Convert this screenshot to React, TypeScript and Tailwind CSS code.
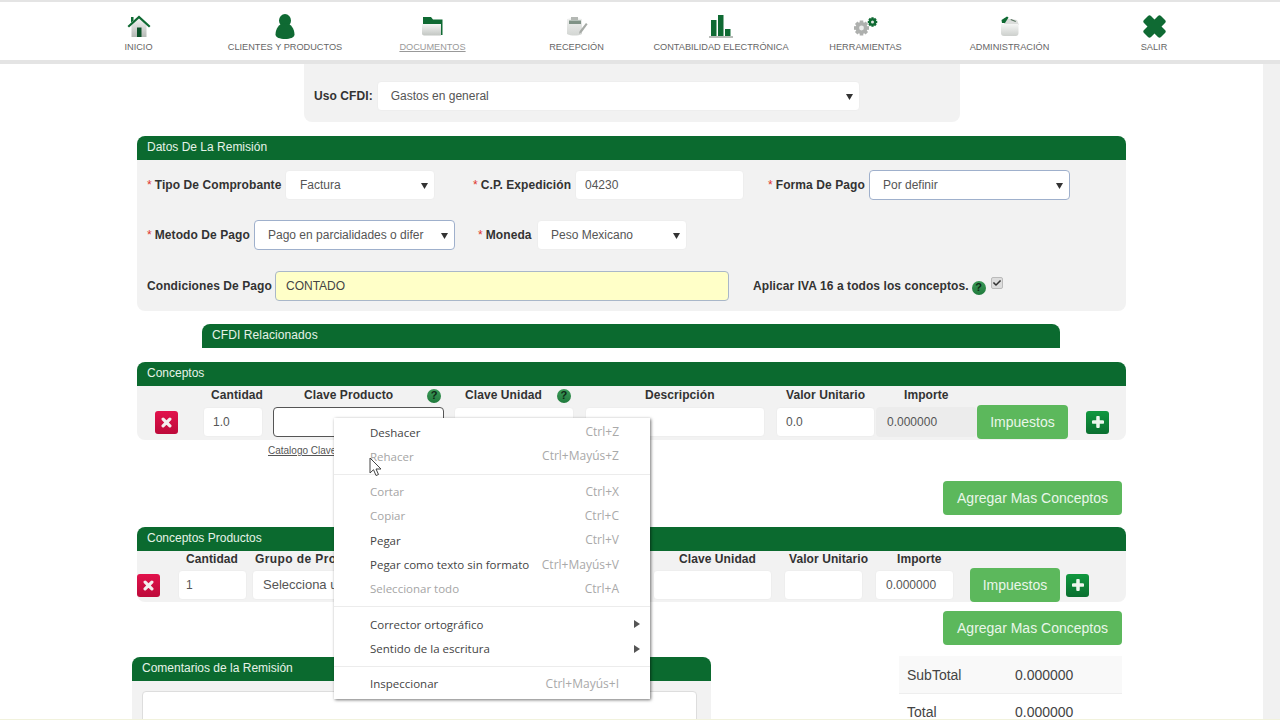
import React from "react";
import { FaCheck } from "react-icons/fa";

const GREEN = "#0f6a33";

function HomeIcon() {
  return (
    <svg width="24" height="22" viewBox="0 0 24 22">
      <defs>
        <linearGradient id="homeBody" x1="0" y1="0" x2="0" y2="1">
          <stop offset="0" stopColor="#f4f5f4" />
          <stop offset="1" stopColor="#b4b8b4" />
        </linearGradient>
      </defs>
      <path d="M4.500 10 12 3.500l7.500 6.500v12h-15z" fill="url(#homeBody)" />
      <path d="M4 2h2.500v3.500L4 7.500z" fill={GREEN} />
      <path d="M0.500 11 12 0.500 23.500 11l-1.500 1.400L12 3.500 2 12.400z" fill={GREEN} />
      <path d="M10 12.500h4.500V22H10z" fill="#0c5229" />
    </svg>
  );
}

function PersonIcon() {
  return (
    <svg width="20" height="25" viewBox="0 0 20 25">
      <ellipse cx="10" cy="6.500" rx="6" ry="6.500" fill={GREEN} />
      <path d="M10 9c6 0 9.500 6 9.500 11.500 0 3-4.500 4.500-9.500 4.500S.5 23.500.5 20.500C.5 15 4 9 10 9z" fill={GREEN} />
    </svg>
  );
}

function FolderIcon() {
  return (
    <svg width="21" height="20" viewBox="0 0 21 20">
      <defs>
        <linearGradient id="folderFront" x1="0" y1="0" x2="0" y2="1">
          <stop offset="0" stopColor="#f5f6f5" />
          <stop offset="1" stopColor="#c2c6c2" />
        </linearGradient>
      </defs>
      <path d="M1 1h8l2 2.500h9.500V19H19V8H1z" fill={GREEN} />
      <path d="M1 4h17v4H1z" fill={GREEN} />
      <path d="M0 8h19v11.500H2c-1 0-2-1-2-2z" fill="url(#folderFront)" />
    </svg>
  );
}

function ClipboardIcon() {
  return (
    <svg width="22" height="20" viewBox="0 0 22 20">
      <defs>
        <linearGradient id="clipBody" x1="0" y1="0" x2="0" y2="1">
          <stop offset="0" stopColor="#f0f1f0" />
          <stop offset="1" stopColor="#d3d6d3" />
        </linearGradient>
      </defs>
      <path d="M1 3c4-1.500 11-1.500 15 0v15c-4 2-11 2-15 0z" fill="url(#clipBody)" />
      <path d="M5 1h7v3H5z" fill="#b4b8b4" />
      <path d="M3 4.500h12v3.500H3z" fill="#7f9286" />
      <path d="M20 7l1.600 1.200-6 8.300-2.600 1.300.7-2.800z" fill="#a7aba7" />
    </svg>
  );
}

function BarsIcon() {
  return (
    <svg width="24" height="23" viewBox="0 0 24 23">
      <path d="M2 5h5.500v16H2zM9 0h5.500v21H9zM16 14h5.500v7H16z" fill={GREEN} />
      <path d="M0 21h24v2H0z" fill="#b9bdb9" />
    </svg>
  );
}

function Gear({ cx, cy, r, fill, hole }: { cx: number; cy: number; r: number; fill: string; hole: string }) {
  const teeth = [0, 45, 90, 135];
  return (
    <g>
      {teeth.map((a) => (
        <rect
          key={a}
          x={cx - r * 0.3}
          y={cy - r * 1.25}
          width={r * 0.6}
          height={r * 2.5}
          fill={fill}
          transform={`rotate(${a} ${cx} ${cy})`}
        />
      ))}
      <circle cx={cx} cy={cy} r={r} fill={fill} />
      <circle cx={cx} cy={cy} r={r * 0.4} fill={hole} />
    </g>
  );
}

function GearsIcon() {
  return (
    <svg width="25" height="19" viewBox="0 0 25 19">
      <Gear cx={8.500} cy={11} r={6} fill="#aeb0ae" hole="#ececec" />
      <Gear cx={19.500} cy={5} r={3.800} fill={GREEN} hole="#dfe6df" />
    </svg>
  );
}

function AdminIcon() {
  return (
    <svg width="20" height="20" viewBox="0 0 20 20">
      <defs>
        <linearGradient id="adminBody" x1="0" y1="0" x2="0" y2="1">
          <stop offset="0" stopColor="#f5f6f5" />
          <stop offset="1" stopColor="#cdd0cd" />
        </linearGradient>
      </defs>
      <path d="M4 2l13 2 2 5H4z" fill="#dcdedc" />
      <path d="M1.500 4 7 0.500l1.500 1L5 7H2z" fill={GREEN} />
      <path d="M11 3l5 2-.5 1-5-2z" fill="#59735f" />
      <path d="M1 8h17.500v9c0 2-1 3-3 3H4c-2 0-3-1-3-3z" fill="url(#adminBody)" />
    </svg>
  );
}

function ExitIcon() {
  return (
    <svg width="25" height="25" viewBox="0 0 25 25">
      <path
        d="M2 6 6 2c1-1 2-1 3 0l3.500 3.500L16 2c1-1 2-1 3 0l4 4c1 1 1 2 0 3l-3.500 3.500L23 16c1 1 1 2 0 3l-4 4c-1 1-2 1-3 0l-3.500-3.500L9 23c-1 1-2 1-3 0l-4-4c-1-1-1-2 0-3l3.500-3.500L2 9C1 8 1 7 2 6z"
        fill={GREEN}
      />
    </svg>
  );
}

function NavItem({ label, icon, className }: { label: string; icon: React.ReactNode; className: string }) {
  return (
    <a className={`flex flex-col items-center text-[9.200px] leading-3 text-[#666] ${className}`}>
      <div className="flex h-[26px] items-center justify-center">{icon}</div>
      <span className="mt-[2px] whitespace-nowrap">{label}</span>
    </a>
  );
}

function Arrow() {
  return (
    <svg width="7" height="7" viewBox="0 0 7 7" className="shrink-0">
      <path d="M0 1h7L3.500 7z" fill="#333" />
    </svg>
  );
}

function Select({ value, className, focused }: { value: string; className: string; focused?: boolean }) {
  return (
    <div
      className={`flex h-[30px] shrink-0 items-center justify-between rounded bg-white pr-[6px] text-xs text-[#555] ${
        focused ? "border border-[#9fb0cc]" : "border border-[#eeeeee]"
      } ${className}`}
    >
      <span className="whitespace-nowrap">{value}</span>
      <Arrow />
    </div>
  );
}

function Input({ value, className }: { value?: string; className: string }) {
  return (
    <div className={`flex h-[30px] shrink-0 items-center rounded border border-[#eeeeee] bg-white text-xs text-[#555] ${className}`}>
      {value}
    </div>
  );
}

function Label({ text, required, className }: { text: string; required?: boolean; className?: string }) {
  return (
    <span className={`whitespace-nowrap pb-px text-xs font-bold tracking-[0.08px] text-[#333] ${className ?? ""}`}>
      {required && <span className="mr-[3px] font-normal text-[#e0352b]">*</span>}
      {text}
    </span>
  );
}

function Help({ className }: { className?: string }) {
  return (
    <span
      className={`inline-flex h-[14px] w-[14px] items-center justify-center rounded-full bg-linear-to-b from-[#3c9a58] to-[#1f7a3c] text-[11px] font-bold leading-none text-[#0d2a17] ${className ?? ""}`}
    >
      ?
    </span>
  );
}

function PanelHeader({ title, className }: { title: string; className?: string }) {
  return (
    <div className={`flex h-[24px] items-center rounded-t-lg bg-[#0b6a2f] pb-[2px] pl-[10px] text-xs text-[#e6f3e8] ${className ?? ""}`}>
      {title}
    </div>
  );
}

function RemoveButton() {
  return (
    <button className="flex h-[23px] w-[23px] items-center justify-center rounded-[3px] bg-linear-to-b from-[#e2124c] to-[#bd0a3a]">
      <svg width="11" height="11" viewBox="0 0 13 13">
        <path d="M2.500 2.500l8 8M10.500 2.500l-8 8" stroke="#f3eeee" strokeWidth="3.800" strokeLinecap="round" />
      </svg>
    </button>
  );
}

function AddButton() {
  return (
    <button className="flex h-[23px] w-[23px] items-center justify-center rounded-[3px] bg-linear-to-b from-[#11983f] to-[#0a6f30]">
      <svg width="12" height="12" viewBox="0 0 13 13">
        <path d="M6.500 1.500v10M1.500 6.500h10" stroke="#eef6ee" strokeWidth="3.800" strokeLinecap="round" />
      </svg>
    </button>
  );
}

function GreenButton({ text, className }: { text: string; className: string }) {
  return (
    <button className={`flex items-center justify-center rounded bg-[#5cb85c] text-sm text-[#e9f6e9] ${className}`}>
      {text}
    </button>
  );
}

function MenuItem({ text, shortcut, disabled, submenu }: { text: string; shortcut?: string; disabled?: boolean; submenu?: boolean }) {
  return (
    <div className={`flex h-[24.300px] items-center justify-between pl-[36px] pr-[31px] text-[11.500px] ${disabled ? "text-[#a5a5a5]" : "text-[#444]"}`}>
      <span>{text}</span>
      {shortcut && <span className="text-[12px] text-[#a9a9a9]">{shortcut}</span>}
      {submenu && (
        <svg width="6" height="8" viewBox="0 0 6 8" className="-mr-[21px]">
          <path d="M0 0l6 4-6 4z" fill="#555" />
        </svg>
      )}
    </div>
  );
}

function MenuSeparator() {
  return <div className="my-[5px] h-px bg-[#ececec]" />;
}

function ContextMenu() {
  return (
    <div
      className="absolute left-[334px] top-[418px] z-20 w-[316px] bg-white pb-[3px] pt-[2px] shadow-[1px_1px_3px_rgba(0,0,0,0.55)]"
      style={{ fontFamily: '"Open Sans", "Noto Sans", sans-serif' }}
    >
      <MenuItem text="Deshacer" shortcut="Ctrl+Z" />
      <MenuItem text="Rehacer" shortcut="Ctrl+Mayús+Z" disabled />
      <MenuSeparator />
      <MenuItem text="Cortar" shortcut="Ctrl+X" disabled />
      <MenuItem text="Copiar" shortcut="Ctrl+C" disabled />
      <MenuItem text="Pegar" shortcut="Ctrl+V" />
      <MenuItem text="Pegar como texto sin formato" shortcut="Ctrl+Mayús+V" />
      <MenuItem text="Seleccionar todo" shortcut="Ctrl+A" disabled />
      <MenuSeparator />
      <MenuItem text="Corrector ortográfico" submenu />
      <MenuItem text="Sentido de la escritura" submenu />
      <MenuSeparator />
      <MenuItem text="Inspeccionar" shortcut="Ctrl+Mayús+I" />
    </div>
  );
}

export default function App() {
  return (
    <div
      className="relative h-[720px] w-[1280px] overflow-hidden bg-white"
      style={{ fontFamily: '"Liberation Sans", Arial, sans-serif' }}
    >
      {/* Top menu */}
      <header className="flex h-[64px] border-b-4 border-t-2 border-[#e4e4e4] bg-white pl-[125px] pt-[11px]">
        <NavItem label="INICIO" icon={<HomeIcon />} className="w-[27px]" />
        <NavItem label="CLIENTES Y PRODUCTOS" icon={<PersonIcon />} className="ml-[76px] w-[114px]" />
        <NavItem label="DOCUMENTOS" icon={<FolderIcon />} className="ml-[58px] w-[65px] !text-[#999] underline" />
        <NavItem label="RECEPCIÓN" icon={<ClipboardIcon />} className="ml-[84px] w-[55px]" />
        <NavItem label="CONTABILIDAD ELECTRÓNICA" icon={<BarsIcon />} className="ml-[50px] w-[134px]" />
        <NavItem label="HERRAMIENTAS" icon={<GearsIcon />} className="ml-[42px] w-[71px]" />
        <NavItem label="ADMINISTRACIÓN" icon={<AdminIcon />} className="ml-[69px] w-[79px]" />
        <NavItem label="SALIR" icon={<ExitIcon />} className="ml-[92px] w-[26px]" />
      </header>

      <div className="flex h-[656px]">
        <main className="w-[1263px] shrink-0">
          {/* Uso CFDI */}
          <div className="ml-[304px] flex h-[58px] w-[656px] items-center rounded-b-lg bg-[#f2f2f2] pl-[10px] pt-[6px]">
            <Label text="Uso CFDI:" className="mr-[4px]" />
            <Select value="Gastos en general" className="w-[483px] pl-[13px]" />
          </div>

          {/* Datos de la remisión */}
          <section className="ml-[137px] mt-[14px] w-[989px]">
            <PanelHeader title="Datos De La Remisión" />
            <div className="h-[151px] rounded-b-lg bg-[#f2f2f2] pl-[10px] pt-[10px]">
              <div className="flex h-[30px] items-center">
                <Label text="Tipo De Comprobante" required className="w-[138px]" />
                <Select value="Factura" className="w-[150px] pl-[14px]" />
                <Label text="C.P. Expedición" required className="ml-[38px] w-[102px]" />
                <Input value="04230" className="w-[169px] pl-[9px]" />
                <Label text="Forma De Pago" required className="ml-[24px] w-[101px]" />
                <Select value="Por definir" focused className="w-[201px] pl-[13px]" />
              </div>
              <div className="mt-[20px] flex h-[30px] items-center">
                <Label text="Metodo De Pago" required className="w-[107px]" />
                <Select value="Pago en parcialidades o difer" focused className="w-[201px] pl-[13px]" />
                <Label text="Moneda" required className="ml-[23px] w-[59px]" />
                <Select value="Peso Mexicano" className="w-[150px] pl-[13px]" />
              </div>
              <div className="mt-[21px] flex h-[30px] items-center">
                <Label text="Condiciones De Pago" className="w-[128px]" />
                <Input value="CONTADO" className="w-[454px] !border-[#a9b7c9] !bg-[#ffffc8] pl-[10px] !text-[#444]" />
                <Label text="Aplicar IVA 16 a todos los conceptos." className="ml-[24px]" />
                <Help className="ml-[3px] mt-[3px]" />
                <span className="mb-[6px] ml-[5px] flex h-[12px] w-[12px] items-center justify-center rounded-[2px] border border-[#bbbbbb] bg-[#dddddd] text-[8px] text-[#333]">
                  <FaCheck />
                </span>
              </div>
            </div>
          </section>

          {/* CFDI relacionados */}
          <PanelHeader title="CFDI Relacionados" className="ml-[202px] mt-[13px] w-[858px] tracking-[0.1px]" />

          {/* Conceptos */}
          <section className="ml-[137px] mt-[14px] w-[989px]">
            <PanelHeader title="Conceptos" />
            <div className="h-[54px] rounded-b-lg bg-[#f2f2f2]">
              <div className="grid h-[19px] grid-cols-[66px_70px_181px_131px_191px_100px_101px_109px_40px] items-center">
                <span />
                <Label text="Cantidad" className="pl-[8px]" />
                <div className="flex items-center">
                  <Label text="Clave Producto" className="pl-[31px]" />
                  <Help className="ml-[34px]" />
                </div>
                <div className="flex items-center">
                  <Label text="Clave Unidad" className="pl-[11px]" />
                  <Help className="ml-[15px]" />
                </div>
                <Label text="Descripción" className="pl-[60px]" />
                <Label text="Valor Unitario" className="pl-[10px]" />
                <Label text="Importe" className="pl-[28px]" />
              </div>
              <div className="grid h-[34px] grid-cols-[66px_70px_181px_131px_191px_100px_101px_109px_40px] items-center">
                <div className="pl-[18px]">
                  <RemoveButton />
                </div>
                <Input value="1.0" className="w-[60px] pl-[9px]" />
                <div className="h-[30px] w-[171px] rounded border border-[#555] bg-white" />
                <Input className="w-[120px]" />
                <Input className="w-[180px]" />
                <Input value="0.0" className="w-[99px] pl-[9px]" />
                <Input value="0.000000" className="w-[101px] !border-[#ececec] !bg-[#ececec] pl-[10px]" />
                <GreenButton text="Impuestos" className="h-[34px] w-[91px]" />
                <AddButton />
              </div>
            </div>
          </section>
          <a className="ml-[268px] mt-[4px] block h-[13px] text-[10px] leading-[13px] text-[#555] underline">Catalogo Claves</a>
          <GreenButton text="Agregar Mas Conceptos" className="ml-[943px] mt-[24px] h-[34px] w-[179px]" />

          {/* Conceptos productos */}
          <section className="ml-[137px] mt-[12px] w-[989px]">
            <PanelHeader title="Conceptos Productos" />
            <div className="h-[51px] rounded-b-lg bg-[#f2f2f2]">
              <div className="grid h-[16px] grid-cols-[41px_74px_401px_131px_91px_95px_96px_60px] items-center">
                <span />
                <Label text="Cantidad" className="pl-[8px]" />
                <Label text="Grupo de Productos" className="pl-[3px] !tracking-[0.4px]" />
                <Label text="Clave Unidad" className="pl-[26px]" />
                <Label text="Valor Unitario" className="pl-[5px]" />
                <Label text="Importe" className="pl-[22px]" />
              </div>
              <div className="mt-px grid h-[34px] grid-cols-[41px_74px_401px_131px_91px_95px_96px_60px] items-center">
                <RemoveButton />
                <Input value="1" className="w-[69px] pl-[7px]" />
                <Input value="Selecciona un grupo" className="w-[300px] pl-[10px] !text-[13px]" />
                <Input className="w-[119px]" />
                <Input className="w-[79px]" />
                <Input value="0.000000" className="w-[79px] pl-[10px]" />
                <GreenButton text="Impuestos" className="h-[34px] w-[90px]" />
                <AddButton />
              </div>
            </div>
          </section>
          <GreenButton text="Agregar Mas Conceptos" className="ml-[943px] mt-[9px] h-[34px] w-[179px]" />

          <div className="mt-[12px] flex">
            {/* Comentarios */}
            <section className="ml-[132px] w-[579px]">
              <PanelHeader title="Comentarios de la Remisión" />
              <div className="h-[60px] bg-[#f2f2f2] pl-[10px] pr-[14px] pt-[10px]">
                <div className="h-[60px] rounded border border-[#dddddd] bg-white" />
              </div>
            </section>

            {/* Totales */}
            <div className="ml-[188px] mt-[-1px] w-[223px] text-sm text-[#444]">
              <div className="flex h-[38px] items-center border-b border-[#eeeeee] bg-[#f9f9f9] pl-[8px]">
                <span className="w-[108px]">SubTotal</span>
                <span>0.000000</span>
              </div>
              <div className="flex h-[36px] items-center pl-[8px]">
                <span className="w-[108px]">Total</span>
                <span>0.000000</span>
              </div>
            </div>
          </div>
        </main>
        <div className="w-[17px] bg-[#f1f1f1]" />
      </div>

      <ContextMenu />

      {/* Mouse pointer */}
      <svg width="14" height="20" viewBox="0 0 14 20" className="absolute left-[369px] top-[457px] z-30">
        <path d="M1 1v15l3.500-3.300L7 18.500l2.500-1-2.500-5.500h5z" fill="#fff" stroke="#444" strokeWidth="1" />
      </svg>

      {/* Faint line along the bottom edge */}
      <div className="absolute bottom-0 left-0 z-30 h-px w-full bg-[#f1f2dc]" />
    </div>
  );
}
